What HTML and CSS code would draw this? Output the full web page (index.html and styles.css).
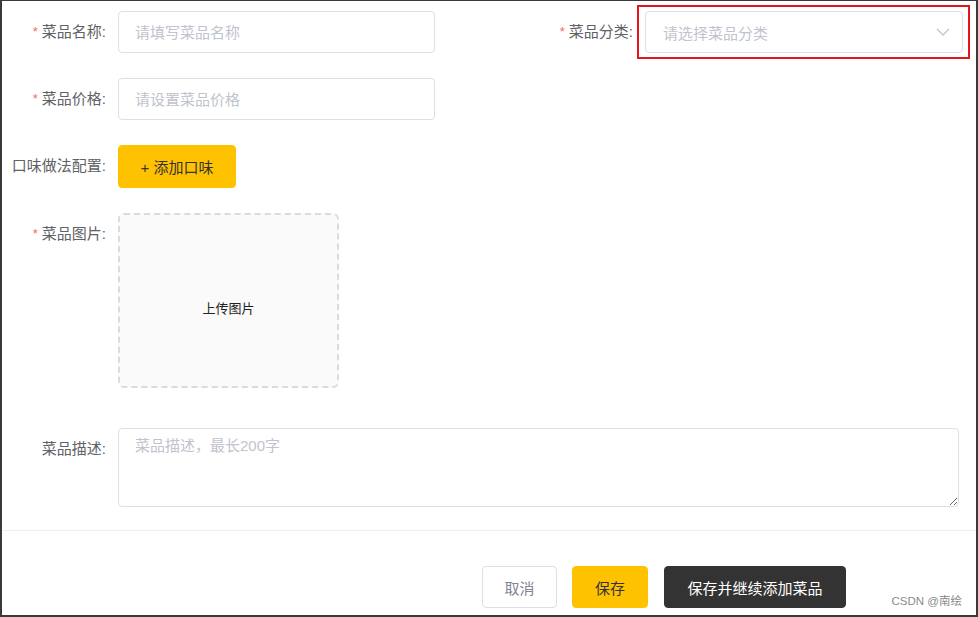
FILE: index.html
```html
<!DOCTYPE html>
<html lang="zh-CN">
<head>
<meta charset="utf-8">
<title>添加菜品</title>
<link rel="stylesheet" href="styles.css">
</head>
<body>
<div class="frame">
  <form class="form">
    <div class="row row-split">
      <div class="item item-left">
        <label class="label"><span class="req">*</span>菜品名称:</label>
        <div class="control"><input class="input" type="text" placeholder="请填写菜品名称"></div>
      </div>
      <div class="item item-right">
        <label class="label"><span class="req">*</span>菜品分类:</label>
        <div class="control">
          <div class="select highlight">
            <span class="select-ph">请选择菜品分类</span>
            <svg class="chevron" width="14" height="8" viewBox="0 0 14 8"><path d="M1 1 L7 7 L13 1" fill="none" stroke="#c0c4cc" stroke-width="1.3"/></svg>
          </div>
        </div>
      </div>
    </div>
    <div class="row">
      <div class="item item-left">
        <label class="label"><span class="req">*</span>菜品价格:</label>
        <div class="control"><input class="input" type="text" placeholder="请设置菜品价格"></div>
      </div>
    </div>
    <div class="row">
      <div class="item">
        <label class="label label-tight">口味做法配置:</label>
        <div class="control"><button type="button" class="btn btn-add">+ 添加口味</button></div>
      </div>
    </div>
    <div class="row row-upload">
      <div class="item">
        <label class="label"><span class="req">*</span>菜品图片:</label>
        <div class="control"><div class="upload">上传图片</div></div>
      </div>
    </div>
    <div class="row row-desc">
      <div class="item">
        <label class="label">菜品描述:</label>
        <div class="control"><textarea class="textarea" placeholder="菜品描述，最长200字"></textarea></div>
      </div>
    </div>
  </form>
  <div class="divider"></div>
  <div class="actions">
    <button type="button" class="btn btn-cancel">取消</button>
    <button type="button" class="btn btn-save">保存</button>
    <button type="button" class="btn btn-dark">保存并继续添加菜品</button>
  </div>
  <div class="watermark">CSDN @南绘</div>
</div>
</body>
</html>
```
FILE: styles.css
```css
* { box-sizing: border-box; }
html, body { margin: 0; padding: 0; background: #fff; }
body {
  font-family: "Liberation Sans", "Noto Sans CJK SC", sans-serif;
  font-size: 15px;
  color: #606266;
}
.frame {
  position: relative;
  width: 978px;
  height: 617px;
  border: 2px solid #3a3a3a;
  border-top-width: 1px;
  overflow: hidden;
}
.form {
  padding-top: 10px;
}
.row {
  display: flex;
  margin-bottom: 25px;
}
.row-split { gap: 94px; }
.row-upload { margin-bottom: 40px; }
.row-desc { margin-bottom: 0; }
.item {
  display: flex;
  align-items: flex-start;
}
.item-left { width: 433px; }
.item-right { width: 434px; }
.label {
  flex: 0 0 116px;
  width: 116px;
  padding-right: 12px;
  text-align: right;
  line-height: 42px;
  height: 42px;
  color: #606266;
  white-space: nowrap;
}
.label-tight { padding-right: 12px; }
.req {
  color: #f56c6c;
  font-size: 13px;
  margin-right: 4px;
  vertical-align: 1px;
}
.control { flex: 1; }
.input, .select {
  display: flex;
  align-items: center;
  width: 100%;
  height: 42px;
  border: 1px solid #dcdfe6;
  border-radius: 4px;
  padding: 0 16px;
  font-family: inherit;
  font-size: 15px;
  color: #606266;
  background: #fff;
  outline: none;
}
.input::placeholder, .textarea::placeholder { color: #c0c4cc; }
.select {
  position: relative;
  justify-content: space-between;
  padding-left: 17px;
}
.select-ph { color: #c0c4cc; }
.chevron { margin-right: -4px; }
.highlight::after {
  content: "";
  position: absolute;
  left: -9px;
  right: -8px;
  top: -7px;
  bottom: -7px;
  border: 2px solid #e8141b;
  pointer-events: none;
}
.btn {
  font-family: inherit;
  font-size: 15px;
  height: 42px;
  border-radius: 4px;
  cursor: pointer;
  padding: 0;
}
.btn-add {
  width: 118px;
  height: 43px;
  background: #ffc200;
  border: 1px solid #ffc200;
  color: #333;
}
.upload {
  width: 221px;
  height: 175px;
  border: 2px dashed #d9dbe0;
  border-radius: 6px;
  background: #fafafa;
  display: flex;
  align-items: center;
  justify-content: center;
  font-size: 13px;
  color: #222;
  padding-top: 14px;
}
.textarea {
  display: block;
  width: 841px;
  height: 79px;
  border: 1px solid #dcdfe6;
  border-radius: 4px;
  padding: 6px 16px;
  font-family: inherit;
  font-size: 15px;
  line-height: 22px;
  color: #606266;
  resize: vertical;
  outline: none;
}
.divider {
  height: 1px;
  background: #f0f0f0;
  margin-top: 23px;
}
.actions {
  display: flex;
  gap: 15px;
  padding-left: 480px;
  margin-top: 35px;
}
.btn-cancel {
  width: 75px;
  background: #fff;
  border: 1px solid #dcdfe6;
  color: #818693;
}
.btn-save {
  width: 76px;
  background: #ffc200;
  border: 1px solid #ffc200;
  color: #333;
}
.btn-dark {
  width: 182px;
  margin-left: 1px;
  background: #333;
  border: 1px solid #333;
  color: #fff;
}
.watermark {
  position: absolute;
  right: 14px;
  bottom: 7px;
  font-size: 11.5px;
  color: #8a8a8a;
  line-height: 14px;
}
```
